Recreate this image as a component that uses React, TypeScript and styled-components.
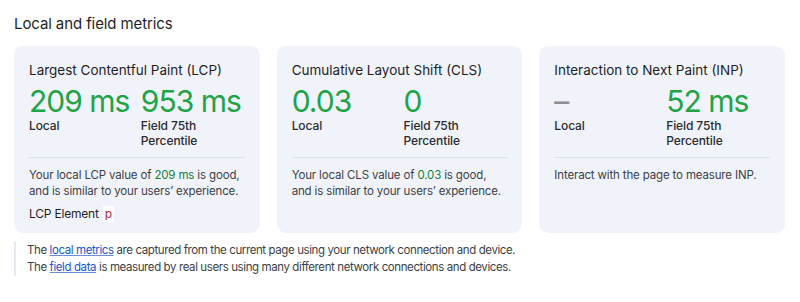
import React from "react";
import styled, { createGlobalStyle } from "styled-components";

type Metric = {
  title: string;
  abbr: string;
  local: string;
  field: string;
  measured: boolean;
  element?: string;
};

const metrics: Metric[] = [
  {
    title: "Largest Contentful Paint (LCP)",
    abbr: "LCP",
    local: "209 ms",
    field: "953 ms",
    measured: true,
    element: "p",
  },
  {
    title: "Cumulative Layout Shift (CLS)",
    abbr: "CLS",
    local: "0.03",
    field: "0",
    measured: true,
  },
  {
    title: "Interaction to Next Paint (INP)",
    abbr: "INP",
    local: "-",
    field: "52 ms",
    measured: false,
  },
];

const App = () => {
  return (
    <Page>
      <GlobalStyle />
      <Heading>Local and field metrics</Heading>
      <Cards>
        {metrics.map((m) => (
          <Card key={m.title}>
            <CardTitle>{m.title}</CardTitle>
            <Values>
              <ValueCol>
                <BigValue $empty={!m.measured}>
                  {m.measured ? m.local : "–"}
                </BigValue>
                <ValueLabel>Local</ValueLabel>
              </ValueCol>
              <ValueCol>
                <BigValue>{m.field}</BigValue>
                <ValueLabel>
                  Field 75th
                  <br />
                  Percentile
                </ValueLabel>
              </ValueCol>
            </Values>
            <Divider />
            {m.measured ? (
              <Summary>
                Your local {m.abbr} value of <Good>{m.local}</Good> is good,
                and is similar to your users’ experience.
              </Summary>
            ) : (
              <Summary>Interact with the page to measure {m.abbr}.</Summary>
            )}
            {m.element && (
              <ElementRow>
                LCP Element <ElementTag>{m.element}</ElementTag>
              </ElementRow>
            )}
          </Card>
        ))}
      </Cards>
      <Note>
        The <Link href="#">local metrics</Link> are captured from the current
        page using your network connection and device.
        <br />
        The <Link href="#">field data</Link> is measured by real users using
        many different network connections and devices.
      </Note>
    </Page>
  );
};

const GlobalStyle = createGlobalStyle`
  body {
    margin: 0;
    background: #ffffff;
    font-family: Inter, "Noto Sans", "Liberation Sans", sans-serif;
    color: #1f1f1f;
  }
`;

const Page = styled.div`
  padding: 14px 15px 0 14px;
`;

const Heading = styled.h2`
  margin: 0;
  font-size: 15px;
  line-height: 20px;
  font-weight: 400;
  letter-spacing: -0.1px;
  color: #1f1f1f;
`;

const Cards = styled.div`
  display: grid;
  grid-template-columns: repeat(3, 1fr);
  gap: 17px;
  margin-top: 12px;
`;

const Card = styled.div`
  background: #f1f3fb;
  border-radius: 9px;
  padding: 15px 15px 12px;
  height: 187px;
  box-sizing: border-box;
`;

const CardTitle = styled.div`
  font-size: 13.5px;
  line-height: 18px;
  color: #1f1f1f;
`;

const Values = styled.div`
  display: grid;
  grid-template-columns: 1fr 1fr;
  column-gap: 8px;
  margin-top: 6px;
`;

const ValueCol = styled.div`
  display: flex;
  flex-direction: column;
`;

const BigValue = styled.div<{ $empty?: boolean }>`
  font-size: 30px;
  line-height: 32px;
  white-space: nowrap;
  color: ${(p) => (p.$empty ? "#8a8d93" : "#1ea446")};
  letter-spacing: -1px;
`;

const ValueLabel = styled.div`
  font-size: 12px;
  line-height: 15px;
  font-weight: 500;
  letter-spacing: -0.1px;
  color: #2a2b2e;
  margin-top: 1px;
`;

const Divider = styled.hr`
  border: 0;
  border-top: 1px solid #dde0ee;
  margin: 9px 0 9px;
`;

const Summary = styled.div`
  font-size: 11.5px;
  line-height: 16px;
  letter-spacing: -0.15px;
  color: #3c3f44;
`;

const Good = styled.span`
  color: #188038;
`;

const ElementRow = styled.div`
  margin-top: 7px;
  font-size: 12px;
  line-height: 16px;
  letter-spacing: -0.2px;
  color: #1f1f1f;
  display: flex;
  align-items: center;
  gap: 4px;
`;

const ElementTag = styled.span`
  background: #ffffff;
  color: #c5221f;
  padding: 0 2px;
  font-size: 12px;
`;

const Note = styled.div`
  margin-top: 9px;
  border-left: 2px solid #e6e8f6;
  padding: 0 0 0 11px;
  font-size: 11.5px;
  line-height: 17px;
  letter-spacing: -0.4px;
  color: #3c3f44;
`;

const Link = styled.a`
  color: #1a56c9;
  text-decoration: underline;
  text-decoration-color: #6b8fd6;
`;

export default App;
